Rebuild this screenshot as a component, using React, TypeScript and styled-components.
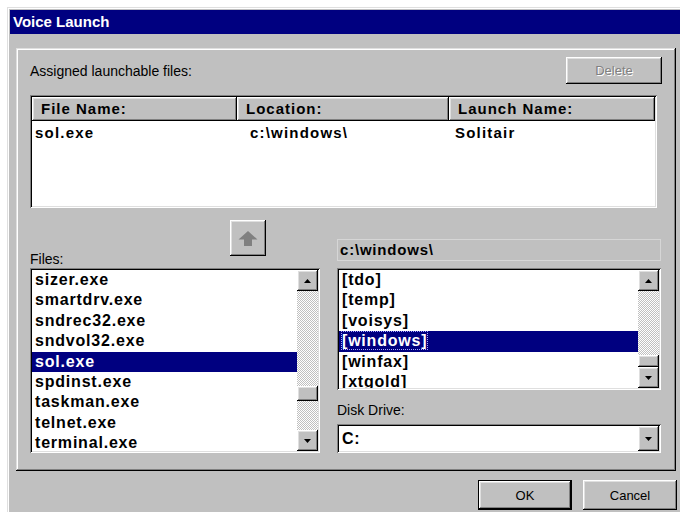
import {FC} from "react";
import styled, {createGlobalStyle, css} from "styled-components";

const GlobalStyle = createGlobalStyle`
  html, body {
    margin: 0;
    padding: 0;
    background: #fff;
    overflow: hidden;
  }

  body {
    font-family: "Liberation Sans", Arial, sans-serif;
    color: #000;
  }
`

const raised = css`
  background: #c0c0c0;
  box-shadow: inset -1px -1px #000, inset 1px 1px #fff, inset -2px -2px #808080, inset 2px 2px #dfdfdf;
`

const sunken = css`
  box-shadow: inset 1px 1px #808080, inset -1px -1px #fff, inset 2px 2px #000, inset -2px -2px #dfdfdf;
`

const Window = styled.div`
  margin: 7px 0 0 7px;
  width: 700px;
  height: 520px;
  background: #c0c0c0;
  border-top: 1px solid #dfdfdf;
  border-left: 1px solid #dfdfdf;
  padding: 2px 0 0 2px;
  box-shadow: inset 1px 1px #fff;
`

const TitleBar = styled.div`
  height: 24px;
  line-height: 24px;
  padding-left: 3px;
  background: #000080;
  color: #fff;
  font-size: 15px;
  font-weight: bold;
`

const Body = styled.div`
  width: 661px;
  padding: 14px 0 0 6px;
`

const Group = styled.div`
  box-sizing: border-box;
  width: 660px;
  height: 423px;
  padding: 9px 14px 0 14px;
  box-shadow: inset -1px -1px #000, inset 1px 1px #dfdfdf, inset -2px -2px #808080, inset 2px 2px #fff;
`

const TopRow = styled.div`
  display: flex;
  justify-content: space-between;
  align-items: center;
  height: 27px;
`

const Label = styled.div`
  font-size: 14px;
  line-height: 16px;
`

const Button = styled.button<{ $width: number; $height: number; $disabled?: boolean; $default?: boolean }>`
  box-sizing: border-box;
  width: ${p => p.$width}px;
  height: ${p => p.$height}px;
  padding: 0;
  border: ${p => p.$default ? "1px solid #000" : "none"};
  font-family: "Liberation Sans", Arial, sans-serif;
  font-size: 13px;
  ${raised};
  color: ${p => p.$disabled ? "#808080" : "#000"};
  text-shadow: ${p => p.$disabled ? "1px 1px #fff" : "none"};
`

const ListView = styled.div`
  box-sizing: border-box;
  margin-top: 11px;
  width: 627px;
  height: 113px;
  padding: 2px;
  background: #fff;
  ${sunken};
`

const Columns = styled.div<{ $height: number }>`
  display: grid;
  grid-template-columns: 205px 212px 206px;
  height: ${p => p.$height}px;
  line-height: ${p => p.$height}px;
`

const HeaderCell = styled.div`
  ${raised};
  padding-left: 9px;
  font-size: 15px;
  font-weight: bold;
  letter-spacing: 1px;
`

const DataCell = styled.div<{ $indent: number }>`
  padding-left: ${p => p.$indent}px;
  font-size: 15px;
  font-weight: bold;
  letter-spacing: 1.2px;
`

const Lower = styled.div`
  display: flex;
  gap: 17px;
`

const Column = styled.div<{ $width: number }>`
  display: flex;
  flex-direction: column;
  width: ${p => p.$width}px;
`

const FilesHeader = styled.div`
  display: flex;
  justify-content: space-between;
  align-items: flex-end;
  height: 60px;
`

const FilesLabel = styled(Label)`
  padding-bottom: 1px;
`

const TransferButton = styled.div`
  ${raised};
  align-self: flex-start;
  display: flex;
  align-items: center;
  justify-content: center;
  width: 36px;
  height: 36px;
  margin: 12px 54px 0 0;
`

const ListBox = styled.div<{ $height: number }>`
  box-sizing: border-box;
  display: flex;
  height: ${p => p.$height}px;
  padding: 2px;
  background: #fff;
  ${sunken};
`

const Items = styled.div`
  flex: 1;
  overflow: hidden;
`

const Item = styled.div<{ $selected?: boolean }>`
  height: 20.4px;
  line-height: 20px;
  padding-left: 3px;
  font-size: 16px;
  font-weight: bold;
  letter-spacing: 0.8px;
  white-space: nowrap;
  background: ${p => p.$selected ? "#000080" : "transparent"};
  color: ${p => p.$selected ? "#fff" : "#000"};
`

const FocusText = styled.span`
  outline: 1px dotted #a8a8ff;
`

const ScrollBar = styled.div`
  display: flex;
  flex-direction: column;
  width: 21px;
`

const ScrollButton = styled.div<{ $height?: number }>`
  ${raised};
  display: flex;
  align-items: center;
  justify-content: center;
  width: 21px;
  height: ${p => p.$height ?? 21}px;
  flex-shrink: 0;
`

const Track = styled.div`
  flex: 1;
  background-color: #c0c0c0;
  background-image: conic-gradient(#fff 25%, #c0c0c0 0 50%, #fff 0 75%, #c0c0c0 0);
  background-size: 2px 2px;
`

const Thumb = styled.div<{ $offset: number; $size: number }>`
  ${raised};
  margin-top: ${p => p.$offset}px;
  height: ${p => p.$size}px;
`

const PathBox = styled.div`
  box-sizing: border-box;
  margin: 31px 0 7px;
  height: 22px;
  padding-left: 2px;
  line-height: 20px;
  border: 1px solid #d6d6d6;
  font-size: 15px;
  font-weight: bold;
  letter-spacing: 0.8px;
`

const DriveLabel = styled(Label)`
  box-sizing: border-box;
  height: 34px;
  padding-top: 12px;
`

const Combo = styled.div`
  box-sizing: border-box;
  display: flex;
  height: 29px;
  padding: 2px;
  background: #fff;
  ${sunken};
`

const ComboText = styled.div`
  flex: 1;
  padding-left: 3px;
  line-height: 25px;
  font-size: 16px;
  font-weight: bold;
  letter-spacing: 0.8px;
`

const Footer = styled.div`
  display: flex;
  justify-content: flex-end;
  gap: 11px;
  margin-top: 9px;
`

const Arrow: FC<{ down?: boolean }> = ({down}) => (
    <svg width="7" height="4" viewBox="0 0 7 4">
        <polygon points={down ? "0,0 7,0 3.5,4" : "3.5,0 7,4 0,4"} fill="#000"/>
    </svg>
)

const UpArrowIcon: FC = () => (
    <svg width="20" height="15" viewBox="0 0 20 15">
        <polygon points="10,0 19.5,8.5 14,8.5 14,15 6,15 6,8.5 0.5,8.5" fill="#808080"/>
    </svg>
)

const Scroller: FC<{ offset: number; size: number }> = ({offset, size}) => (
    <ScrollBar>
        <ScrollButton><Arrow/></ScrollButton>
        <Track>
            <Thumb $offset={offset} $size={size}/>
        </Track>
        <ScrollButton><Arrow down/></ScrollButton>
    </ScrollBar>
)

const files = [
    "sizer.exe", "smartdrv.exe", "sndrec32.exe", "sndvol32.exe", "sol.exe",
    "spdinst.exe", "taskman.exe", "telnet.exe", "terminal.exe",
]

const dirs = ["[tdo]", "[temp]", "[voisys]", "[windows]", "[winfax]", "[xtgold]"]

const App: FC = () => {
    return (
        <>
            <GlobalStyle/>
            <Window>
                <TitleBar>Voice Launch</TitleBar>
                <Body>
                    <Group>
                        <TopRow>
                            <Label>Assigned launchable files:</Label>
                            <Button $width={96} $height={27} $disabled>Delete</Button>
                        </TopRow>
                        <ListView>
                            <Columns $height={24}>
                                <HeaderCell>File Name:</HeaderCell>
                                <HeaderCell>Location:</HeaderCell>
                                <HeaderCell>Launch Name:</HeaderCell>
                            </Columns>
                            <Columns $height={24}>
                                <DataCell $indent={3}>sol.exe</DataCell>
                                <DataCell $indent={13}>c:\windows\</DataCell>
                                <DataCell $indent={6}>Solitair</DataCell>
                            </Columns>
                        </ListView>
                        <Lower>
                            <Column $width={290}>
                                <FilesHeader>
                                    <FilesLabel>Files:</FilesLabel>
                                    <TransferButton><UpArrowIcon/></TransferButton>
                                </FilesHeader>
                                <ListBox $height={185}>
                                    <Items>
                                        {files.map(name => (
                                            <Item key={name} $selected={name === "sol.exe"}>{name}</Item>
                                        ))}
                                    </Items>
                                    <Scroller offset={95} size={15}/>
                                </ListBox>
                            </Column>
                            <Column $width={324}>
                                <PathBox>c:\windows\</PathBox>
                                <ListBox $height={122}>
                                    <Items>
                                        {dirs.map(name => (
                                            <Item key={name} $selected={name === "[windows]"}>
                                                {name === "[windows]" ? <FocusText>{name}</FocusText> : name}
                                            </Item>
                                        ))}
                                    </Items>
                                    <Scroller offset={64} size={12}/>
                                </ListBox>
                                <DriveLabel>Disk Drive:</DriveLabel>
                                <Combo>
                                    <ComboText>C:</ComboText>
                                    <ScrollButton $height={25}><Arrow down/></ScrollButton>
                                </Combo>
                            </Column>
                        </Lower>
                    </Group>
                    <Footer>
                        <Button $width={94} $height={30} $default>OK</Button>
                        <Button $width={94} $height={30}>Cancel</Button>
                    </Footer>
                </Body>
            </Window>
        </>
    )
}

export default App
